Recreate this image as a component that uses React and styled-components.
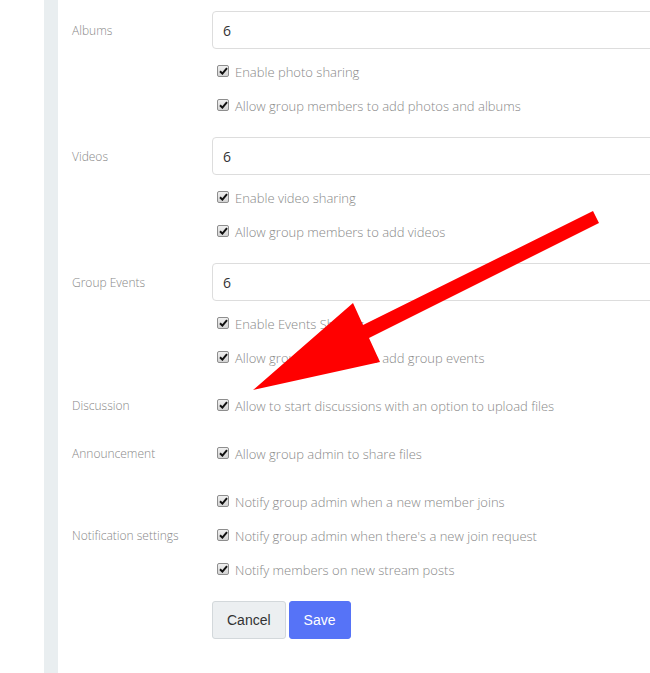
import styled, { createGlobalStyle } from "styled-components";

const GlobalStyle = createGlobalStyle`
  html, body {
    margin: 0;
    padding: 0;
    background: #fff;
    overflow: hidden;
  }
  body {
    font-family: "Open Sans", "Liberation Sans", sans-serif;
  }
`;

const Page = styled.div`
  position: relative;
  display: flex;
  width: 650px;
  height: 673px;
  overflow: hidden;
`;

const Gutter = styled.div`
  width: 44px;
  flex-shrink: 0;
`;

const Strip = styled.div`
  width: 14px;
  flex-shrink: 0;
  background: #e9eef0;
`;

const Content = styled.div`
  padding: 11px 0 0 14px;
  flex-shrink: 0;
`;

const FormGroup = styled.div`
  display: grid;
  grid-template-columns: 140px 520px;
  align-items: ${(p) => (p.$center ? "center" : "start")};
  margin-bottom: 14px;
`;

const Label = styled.div`
  font-size: 12px;
  font-weight: 300;
  color: #888;
  line-height: ${(p) => (p.$tall ? "39px" : "18px")};
`;

const Field = styled.div`
  display: flex;
  flex-direction: column;
`;

const Input = styled.input`
  box-sizing: border-box;
  height: 38px;
  width: 100%;
  border: 1px solid #ddd;
  border-radius: 4px;
  padding: 0 10px;
  margin-bottom: 6px;
  font-family: "Open Sans", "Liberation Sans", sans-serif;
  font-size: 14px;
  color: #333;
  outline: none;
`;

const CheckRow = styled.label`
  display: flex;
  align-items: center;
  height: 34px;
  padding-left: 5px;
  gap: 6px;
  font-size: 13px;
  font-weight: 300;
  color: #888;
`;

const Box = styled.span`
  box-sizing: border-box;
  width: 12px;
  height: 12px;
  border: 1px solid #8e8e8e;
  border-radius: 2px;
  background: linear-gradient(#f0f0f0, #d4d4d4);
  display: flex;
  align-items: center;
  justify-content: center;
  flex-shrink: 0;
  margin-top: -3px;
`;

const Actions = styled.div`
  display: flex;
  gap: 3px;
  margin-left: 140px;
`;

const Button = styled.button`
  height: 38px;
  padding: 0 14px;
  border-radius: 3px;
  font-family: "Liberation Sans", Arial, sans-serif;
  font-size: 14px;
  border: 1px solid ${(p) => (p.$primary ? "#5673f7" : "#d3d8db")};
  background: ${(p) => (p.$primary ? "#5673f7" : "#eceff1")};
  color: ${(p) => (p.$primary ? "#fff" : "#333")};
`;

const Arrow = styled.svg`
  position: absolute;
  left: 0;
  top: 0;
  pointer-events: none;
`;

const Check = ({ children }) => (
  <CheckRow>
    <Box>
      <svg width="9" height="8" viewBox="0 0 9 8">
        <path d="M1 4.2 L3.4 6.6 L8 1.2" fill="none" stroke="#111" strokeWidth="2" />
      </svg>
    </Box>
    {children}
  </CheckRow>
);

const App = () => (
  <>
    <GlobalStyle />
    <Page>
      <Gutter />
      <Strip />
      <Content>
        <FormGroup>
          <Label $tall>Albums</Label>
          <Field>
            <Input defaultValue="6" />
            <Check>Enable photo sharing</Check>
            <Check>Allow group members to add photos and albums</Check>
          </Field>
        </FormGroup>
        <FormGroup>
          <Label $tall>Videos</Label>
          <Field>
            <Input defaultValue="6" />
            <Check>Enable video sharing</Check>
            <Check>Allow group members to add videos</Check>
          </Field>
        </FormGroup>
        <FormGroup>
          <Label $tall>Group Events</Label>
          <Field>
            <Input defaultValue="6" />
            <Check>Enable Events Sharing</Check>
            <Check>Allow group members to add group events</Check>
          </Field>
        </FormGroup>
        <FormGroup $center>
          <Label>Discussion</Label>
          <Field>
            <Check>Allow to start discussions with an option to upload files</Check>
          </Field>
        </FormGroup>
        <FormGroup $center>
          <Label>Announcement</Label>
          <Field>
            <Check>Allow group admin to share files</Check>
          </Field>
        </FormGroup>
        <FormGroup $center>
          <Label>Notification settings</Label>
          <Field>
            <Check>Notify group admin when a new member joins</Check>
            <Check>Notify group admin when there's a new join request</Check>
            <Check>Notify members on new stream posts</Check>
          </Field>
        </FormGroup>
        <Actions>
          <Button>Cancel</Button>
          <Button $primary>Save</Button>
        </Actions>
      </Content>
      <Arrow width="650" height="673" viewBox="0 0 650 673">
        <polygon
          points="253,390 353,303 363,325 593,211 599,223 369,338 380,362"
          fill="#ff0000"
        />
      </Arrow>
    </Page>
  </>
);

export default App;
